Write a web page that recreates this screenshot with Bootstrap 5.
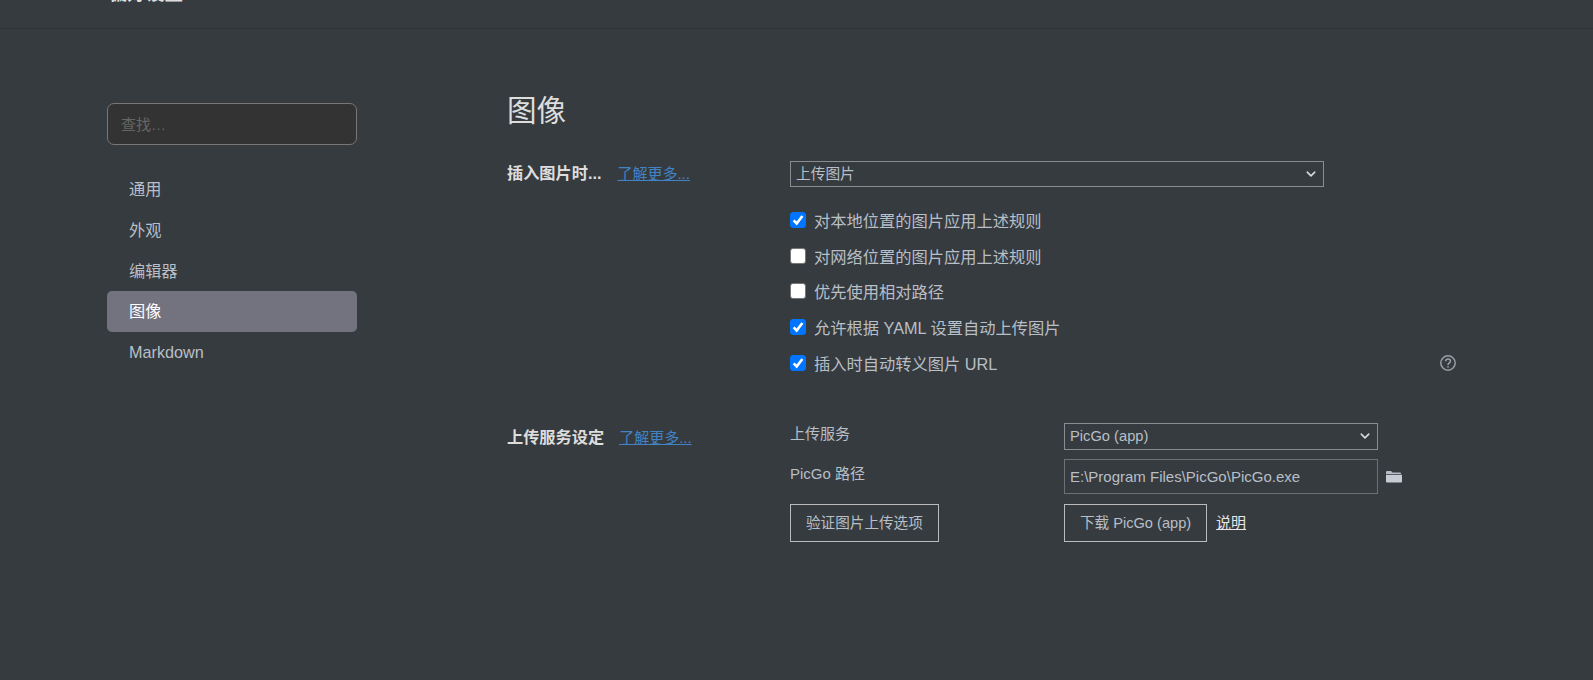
<!DOCTYPE html>
<html lang="zh-CN">
<head>
<meta charset="utf-8">
<title>偏好设置</title>
<link href="https://cdn.jsdelivr.net/npm/bootstrap@5.3.0/dist/css/bootstrap.min.css" rel="stylesheet">
<style>
html,body{height:680px;overflow:hidden}
body{background:#363b40;color:#b8bfc6;font-family:"Liberation Sans","Noto Sans CJK SC",sans-serif;font-size:15px;line-height:20px}
.topbar{height:29px;border-bottom:1px solid #2f3337;overflow:hidden;padding-left:109px}
.topbar-title{margin-top:-15px;font-size:18.5px;line-height:18px;color:#ddd;font-weight:700}
.pref-side{width:250px;margin-left:107px;padding-top:74px;flex:none}
.pref-search{height:42px;background:#333;border:1px solid #777;border-radius:7px;padding:0 13px;color:#b8bfc6;font-size:15px}
.pref-search::placeholder{color:#666}
.pref-search:focus{background:#333;border-color:#777;box-shadow:none;color:#b8bfc6}
.pref-nav{margin-top:24px}
.pref-item{height:40.7px;padding:0 22px;display:flex;align-items:center;color:#b8bfc6;font-size:16.2px;border-radius:5px;text-decoration:none}
.pref-item.is-on{background:#737380;color:#fff}
.pref-main{margin-left:150px;width:960px;padding-top:64px}
.pref-h{font-size:29.6px;line-height:36px;font-weight:400;color:#ddd;margin:0 0 32px}
.pref-left{width:283px;flex:none;display:flex;align-items:baseline}
.pref-label{font-size:16.2px;font-weight:700;color:#ddd;line-height:20px}
.pref-more{font-size:15px;color:#4183c4;margin-left:15px;line-height:20px}
.pref-left-a{padding-top:2px}
.pref-left-a .pref-more{margin-left:16px}
.pref-left-b{padding-top:4px}
.pref-select{display:block;width:534px;height:26px;background-color:#363b40;border:1px solid #8a8d90;border-radius:0;color:#b8bfc6;font-size:14.7px;padding:0 5px;line-height:22px;background-position:right 5px center;background-size:14px 10px}
.pref-select:focus{box-shadow:none;border-color:#8a8d90}
.pref-select{background-image:url("data:image/svg+xml,%3csvg xmlns='http://www.w3.org/2000/svg' viewBox='0 0 16 16'%3e%3cpath fill='none' stroke='%23ddd' stroke-linecap='round' stroke-linejoin='round' stroke-width='2.4' d='m2 5 6 6 6-6'/%3e%3c/svg%3e")}
.pref-checks{margin-top:16px;width:666px}
.pref-check{height:35.8px;display:flex;align-items:center;margin:0;padding:0;font-size:16.25px}
.pref-check .form-check-input{width:16px;height:16px;margin:-2px 8px 0 0;float:none;border-radius:3px;background-color:#fff;border:1px solid #767676}
.pref-check .form-check-input:checked{background-color:#0075ff;border-color:#0075ff;background-size:14px 14px;background-image:url("data:image/svg+xml,%3csvg xmlns='http://www.w3.org/2000/svg' viewBox='0 0 16 16'%3e%3cpath fill='none' stroke='%23fff' stroke-width='3' d='M3 8.500 6.500 12 13 3.500'/%3e%3c/svg%3e")}
.pref-help{margin-left:auto;margin-right:0;margin-top:-3px}
.pref-sec2{margin-top:41px}
.pref-grid{display:grid;grid-template-columns:274px 314px 1fr;grid-auto-rows:auto;row-gap:9px;align-items:center}
.pref-grid .pref-select{width:314px;height:27px;padding:0 5px;font-size:14.7px}
.pref-field{height:35px;background:#363b40;border:1px solid #6d7175;border-radius:0;color:#b8bfc6;font-size:15px;padding:0 5px;margin-bottom:1px}
.pref-field:focus{background:#363b40;color:#b8bfc6;box-shadow:none;border-color:#6d7175}
.pref-btn{height:38px;border:1px solid #bbb;border-radius:0;color:#b8bfc6;background:transparent;font-size:14.6px;padding:0 15px;line-height:36px}
.pref-btn:hover{color:#b8bfc6;border-color:#bbb}
.pref-lbl{font-size:15px;align-self:start;padding-top:1px}
.pref-lbl-path{padding-top:5px}
.pref-doc{font-size:15px;color:#e8e8e8;font-weight:400;margin-left:9px;text-decoration:underline}
</style>
</head>
<body>
<div class="topbar"><div class="topbar-title">偏好设置</div></div>
<div class="d-flex">
  <aside class="pref-side">
    <input class="form-control pref-search" type="text" placeholder="查找…">
    <nav class="pref-nav">
      <a class="pref-item" href="#">通用</a>
      <a class="pref-item" href="#">外观</a>
      <a class="pref-item" href="#">编辑器</a>
      <a class="pref-item is-on" href="#">图像</a>
      <a class="pref-item" href="#">Markdown</a>
    </nav>
  </aside>
  <main class="pref-main">
    <h1 class="pref-h">图像</h1>
    <section class="d-flex">
      <div class="pref-left pref-left-a"><span class="pref-label">插入图片时...</span><a class="pref-more" href="#">了解更多...</a></div>
      <div>
        <select class="form-select pref-select"><option>上传图片</option></select>
        <div class="pref-checks">
          <label class="pref-check"><input class="form-check-input" type="checkbox" checked>对本地位置的图片应用上述规则</label>
          <label class="pref-check"><input class="form-check-input" type="checkbox">对网络位置的图片应用上述规则</label>
          <label class="pref-check"><input class="form-check-input" type="checkbox">优先使用相对路径</label>
          <label class="pref-check"><input class="form-check-input" type="checkbox" checked>允许根据 YAML 设置自动上传图片</label>
          <label class="pref-check"><input class="form-check-input" type="checkbox" checked>插入时自动转义图片 URL
            <svg class="pref-help" width="16" height="16" viewBox="0 0 16 16" fill="none" stroke="#9a9fa4" aria-hidden="true"><circle cx="8" cy="8" r="7.200" stroke-width="1.500"/><path d="M5.600 6.200C5.700 4.800 6.700 4 8 4c1.400 0 2.400.9 2.400 2.100 0 1-.6 1.500-1.300 2-.7.500-1.100.9-1.100 1.800" stroke-width="1.500"/><circle cx="8" cy="11.800" r=".9" fill="#9a9fa4" stroke="none"/></svg>
          </label>
        </div>
      </div>
    </section>
    <section class="d-flex pref-sec2">
      <div class="pref-left pref-left-b"><span class="pref-label">上传服务设定</span><a class="pref-more" href="#">了解更多...</a></div>
      <div class="pref-grid flex-grow-1">
        <div class="pref-lbl">上传服务</div>
        <select class="form-select pref-select"><option>PicGo (app)</option></select>
        <div></div>
        <div class="pref-lbl pref-lbl-path">PicGo 路径</div>
        <input class="form-control pref-field" type="text" value="E:\Program Files\PicGo\PicGo.exe">
        <div class="ps-2 d-flex align-items-center"><svg width="16" height="13" viewBox="0 0 16 13" aria-hidden="true"><path fill="#b4bcc6" d="M0 2a1 1 0 0 1 1-1h4l1.500 1.500H14a1 1 0 0 1 1 1V4H0z"/><path fill="#c6ccd4" d="M0 4.700h16V11.500a1 1 0 0 1-1 1H1a1 1 0 0 1-1-1z"/></svg></div>
        <div><button class="btn pref-btn" type="button">验证图片上传选项</button></div>
        <div class="d-flex align-items-center"><button class="btn pref-btn" type="button">下载 PicGo (app)</button><a class="pref-doc" href="#">说明</a></div>
        <div></div>
      </div>
    </section>
  </main>
</div>
</body>
</html>
